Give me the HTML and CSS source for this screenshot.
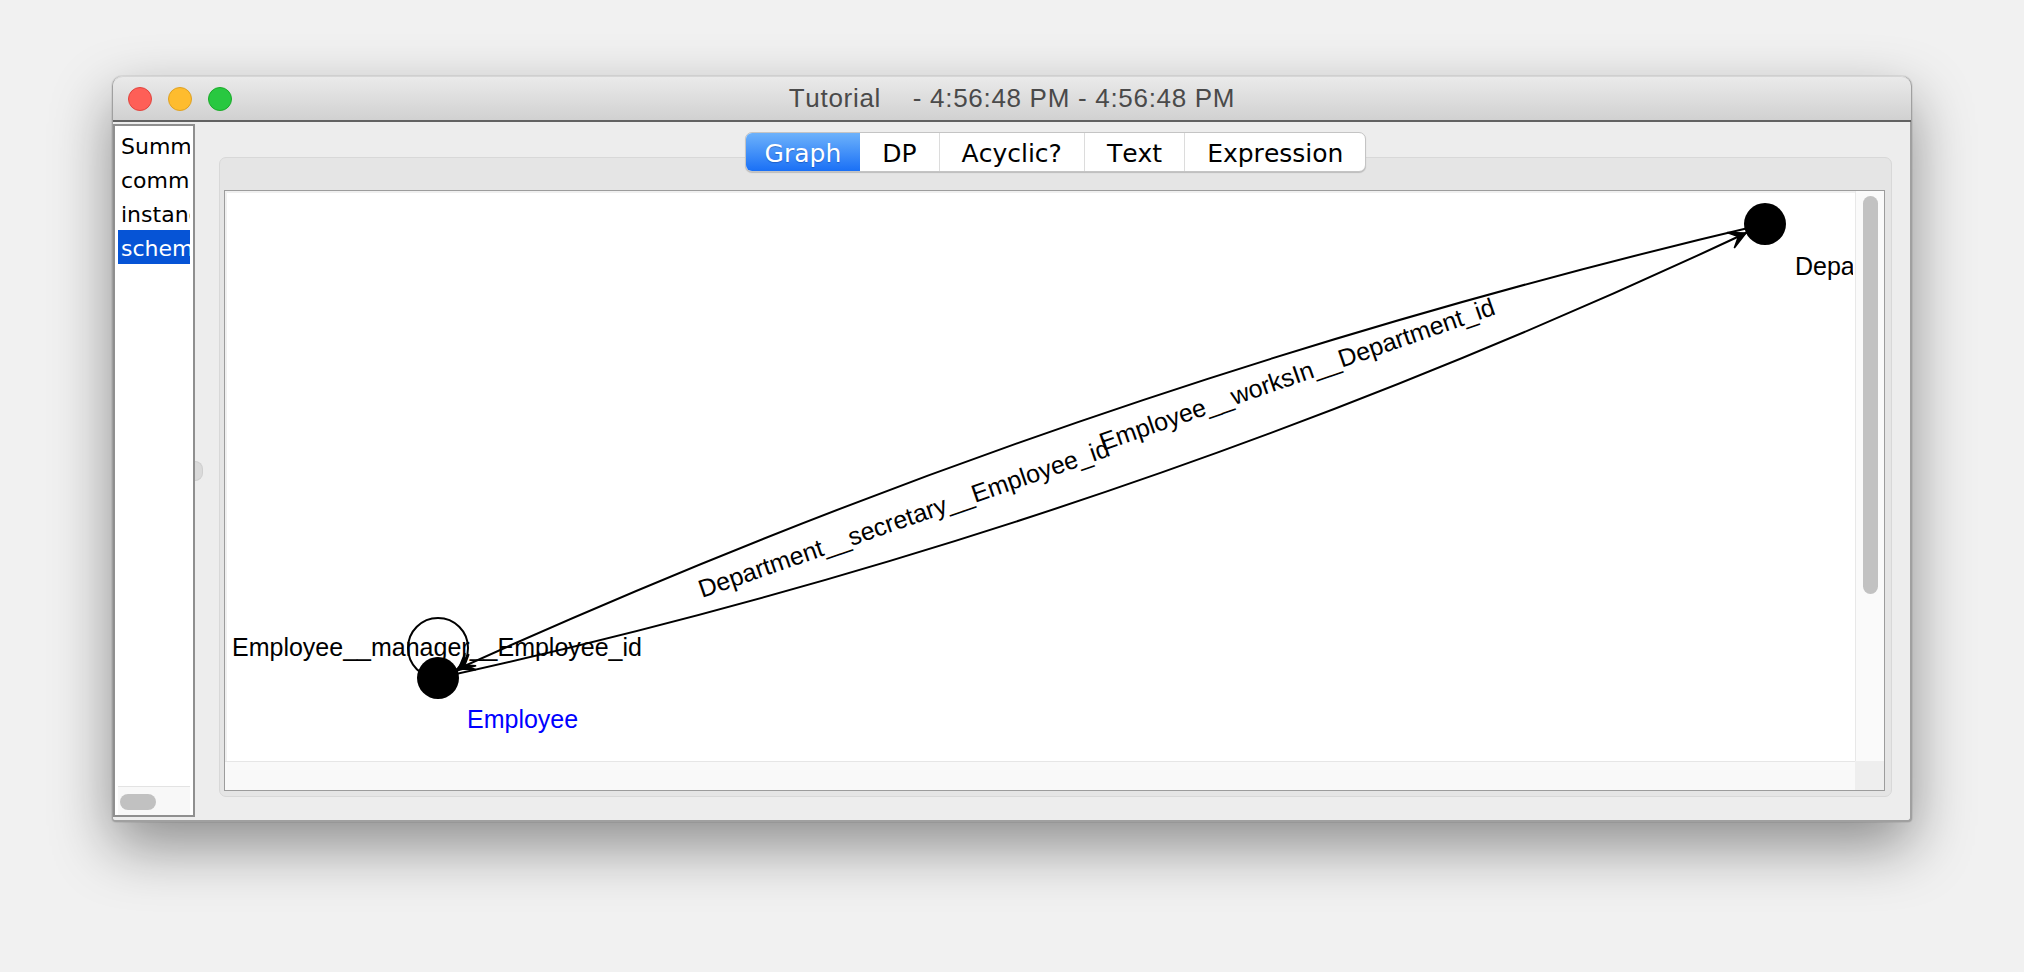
FILE: index.html
```html
<!DOCTYPE html>
<html>
<head>
<meta charset="utf-8">
<title>Tutorial</title>
<link rel="stylesheet" href="styles.css">
</head>
<body>
<div class="desktop">
  <div class="window">
    <div class="titlebar">
      <div class="lights">
        <span class="light red"></span>
        <span class="light yellow"></span>
        <span class="light green"></span>
      </div>
      <div class="title">Tutorial&nbsp;&nbsp;&nbsp;&nbsp;- 4:56:48 PM - 4:56:48 PM</div>
      <div class="spacer"></div>
    </div>
    <div class="content">
      <div class="list">
        <div class="list-view">
          <div class="item">Summary</div>
          <div class="item">commands</div>
          <div class="item">instances</div>
          <div class="item selected">schema</div>
        </div>
        <div class="list-hscroll"><div class="hthumb"></div></div>
      </div>
      <div class="divider"><span class="knob"></span></div>
      <div class="main">
        <div class="tabs">
          <div class="tab-group">
            <div class="tab active">Graph</div>
            <div class="tab">DP</div>
            <div class="tab">Acyclic?</div>
            <div class="tab">Text</div>
            <div class="tab">Expression</div>
          </div>
        </div>
        <div class="panel">
          <div class="scrollpane">
            <div class="viewport">
              <svg class="graph" width="1628" height="570" viewBox="227 191 1628 570" xmlns="http://www.w3.org/2000/svg">
                <g fill="none" stroke="#000" stroke-width="2">
                  <path d="M 440 678 Q 1080.8 384.8 1767 224"/>
                  <path d="M 440 678 Q 1129.4 526.7 1767 224"/>
                  <circle cx="440" cy="648" r="30"/>
                </g>
                <g fill="#000" stroke="#000" stroke-width="1.5" stroke-linejoin="miter">
                  <polygon points="0,0 -17,-8.5 -8.5,0 -17,8.5" transform="translate(459 669) rotate(155.4)"/>
                  <polygon points="0,0 -17,-8.5 -8.5,0 -17,8.5" transform="translate(1748 233) rotate(-25.4)"/>
                  <polygon points="0,0 -17,-8.5 -8.5,0 -17,8.5" transform="translate(459.7 670.6) rotate(138.9)"/>
                </g>
                <g class="elabel">
                  <text x="234" y="656">Employee__manager__Employee_id</text>
                  <text transform="translate(704 598) rotate(-19.2)">Department__secretary__Employee_id</text>
                  <text transform="translate(1105 451) rotate(-19.2)">Employee__worksIn__Department_id</text>
                </g>
                <circle cx="440" cy="678" r="21" fill="#000"/>
                <circle cx="1767" cy="224" r="21" fill="#000"/>
                <text class="vlabel picked" x="469" y="728">Employee</text>
                <text class="vlabel" x="1797" y="275">Department</text>
              </svg>
            </div>
            <div class="vscroll"><div class="vthumb"></div></div>
            <div class="hscroll"></div>
            <div class="corner"></div>
          </div>
        </div>
      </div>
    </div>
  </div>
</div>
</body>
</html>
```

FILE: styles.css
```css
html, body {
  margin: 0;
  padding: 0;
}
body {
  background: #f1f1f1;
  width: 2024px;
  height: 972px;
  overflow: hidden;
  font-kerning: none;
}
.desktop {
  padding: 76px 0 0 112px;
}
.window {
  box-sizing: border-box;
  width: 1800px;
  height: 746px;
  background: #ededed;
  border: 2px solid #a0a0a0;
  border-top: none;
  border-left-width: 1px;
  border-radius: 10px 10px 4px 4px;
  box-shadow: 0 24px 60px rgba(0, 0, 0, 0.42), 0 0 0 1px rgba(0, 0, 0, 0.06);
  display: flex;
  flex-direction: column;
}
.titlebar {
  box-sizing: border-box;
  height: 46px;
  flex: none;
  display: grid;
  grid-template-columns: 1fr auto 1fr;
  align-items: center;
  background: linear-gradient(#eaeaea, #d1d1d1);
  border-top: 1px solid #d6d6d6;
  border-bottom: 2px solid #626262;
  border-radius: 10px 10px 0 0;
  margin: 0 -1px 0 0;
}
.lights {
  display: flex;
  gap: 16px;
  padding-left: 15px;
}
.light {
  width: 24px;
  height: 24px;
  border-radius: 50%;
  box-sizing: border-box;
}
.red { background: #fe5f57; border: 1px solid #e0443e; }
.yellow { background: #febc2e; border: 1px solid #dea123; }
.green { background: #28c840; border: 1px solid #1aab29; }
.title {
  font-family: "Liberation Sans", Arial, sans-serif;
  font-size: 26px;
  letter-spacing: 0.7px;
  line-height: 43px;
  color: #4a4a4a;
  white-space: nowrap;
}
.content {
  flex: 1;
  display: flex;
  min-height: 0;
}
.list {
  box-sizing: border-box;
  width: 82px;
  margin: 2px 0 3px 0;
  border: 2px solid #8f8f8f;
  background: #fff;
  padding: 2px 3px 0;
  display: flex;
  flex-direction: column;
  flex: none;
}
.list-view {
  flex: 1;
  overflow: hidden;
}
.item {
  height: 34px;
  line-height: 37px;
  padding-left: 3px;
  white-space: nowrap;
  overflow: hidden;
  font-family: "DejaVu Sans", Verdana, sans-serif;
  font-size: 22px;
  color: #000;
}
.item.selected {
  background: #0654d6;
  color: #fff;
}
.list-hscroll {
  height: 29px;
  box-sizing: border-box;
  border-top: 1px solid #e3e3e3;
  background: #f8f8f8;
  padding: 7px 0 0 2px;
}
.hthumb {
  width: 36px;
  height: 16px;
  border-radius: 8px;
  background: #c1c1c1;
}
.divider {
  width: 24px;
  flex: none;
  display: flex;
  align-items: center;
}
.knob {
  width: 7px;
  height: 18px;
  border-radius: 0 9px 9px 0;
  background: #dadada;
  border: 1px solid #cfcfcf;
  border-left: none;
}
.main {
  flex: 1;
  margin-right: 18px;
  display: flex;
  flex-direction: column;
}
.tabs {
  display: flex;
  justify-content: center;
  height: 40px;
  margin: 10px 0 -15px;
  position: relative;
  z-index: 1;
}
.tab-group {
  display: flex;
  border: 1px solid #c4c4c4;
  border-radius: 7px;
  background: #fff;
  box-shadow: 0 1px 1px rgba(0, 0, 0, 0.18);
  overflow: hidden;
}
.tab {
  height: 38px;
  line-height: 42px;
  padding: 0 22px;
  border-left: 1px solid #dcdcdc;
  font-family: "DejaVu Sans", Verdana, sans-serif;
  font-size: 25px;
  color: #000;
  white-space: nowrap;
}
.tab.active {
  border-left: none;
  padding: 0 19px;
  background: linear-gradient(#6db2fb, #1a70f6);
  color: #fff;
  text-shadow: 0 1px 1px rgba(0, 40, 120, 0.35);
}
.tab.active + .tab {
  border-left: none;
}
.panel {
  box-sizing: border-box;
  height: 640px;
  border: 1px solid #d8d8d8;
  border-radius: 7px;
  background: #e5e5e5;
  padding: 32px 6px 5px 4px;
}
.scrollpane {
  box-sizing: border-box;
  height: 601px;
  border: 1px solid #9c9c9c;
  background: #fff;
  display: grid;
  grid-template-columns: 1fr 29px;
  grid-template-rows: 1fr 29px;
}
.viewport {
  overflow: hidden;
  background: #fff;
  box-shadow: inset 2px 2px 0 #f0f0f0;
}
.graph {
  display: block;
}
.elabel text, .vlabel {
  font-family: "Liberation Sans", Arial, sans-serif;
  font-size: 25px;
  fill: #000;
}
.vlabel.picked {
  fill: #0000ff;
}
.vscroll {
  background: #fafafa;
  border-left: 1px solid #e8e8e8;
  padding: 5px 0 0 7px;
}
.vthumb {
  width: 15px;
  height: 398px;
  border-radius: 8px;
  background: #c2c2c2;
}
.hscroll {
  background: #f9f9f9;
  border-top: 1px solid #e6e6e6;
}
.corner {
  background: #eeeeee;
}
```
